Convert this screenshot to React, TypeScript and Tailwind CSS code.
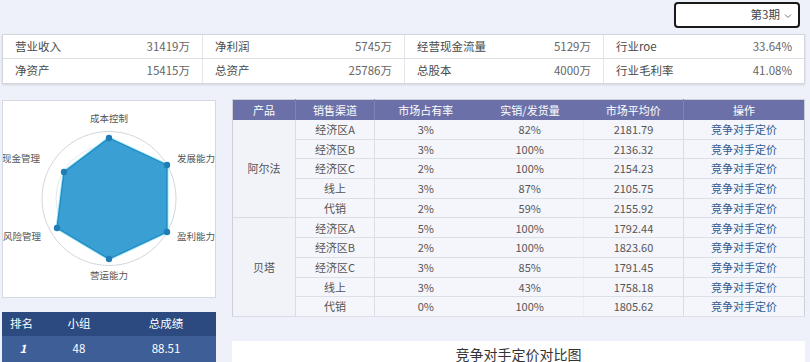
import React from "react";

const font = { fontFamily: '"Noto Sans CJK SC", "Noto Sans", sans-serif' };

const kpis = [
  [
    ["营业收入", "31419万"],
    ["净利润", "5745万"],
    ["经营现金流量", "5129万"],
    ["行业roe", "33.64%"],
  ],
  [
    ["净资产", "15415万"],
    ["总资产", "25786万"],
    ["总股本", "4000万"],
    ["行业毛利率", "41.08%"],
  ],
];

const rows: [string, string, string, string][] = [
  ["经济区A", "3%", "82%", "2181.79"],
  ["经济区B", "3%", "100%", "2136.32"],
  ["经济区C", "2%", "100%", "2154.23"],
  ["线上", "3%", "87%", "2105.75"],
  ["代销", "2%", "59%", "2155.92"],
  ["经济区A", "5%", "100%", "1792.44"],
  ["经济区B", "2%", "100%", "1823.60"],
  ["经济区C", "3%", "85%", "1791.45"],
  ["线上", "3%", "43%", "1758.18"],
  ["代销", "0%", "100%", "1805.62"],
];

function Radar() {
  const pts = [
    [109, 138],
    [167, 165],
    [167, 232],
    [109, 259],
    [57, 228],
    [64, 172],
  ];
  const poly = pts.map((p) => `${p[0] - 3},${p[1] - 101}`).join(" ");
  return (
    <svg width="212" height="196" viewBox="0 0 212 196" className="block">
      <circle cx="106" cy="97.5" r="67" fill="none" stroke="#d4d6dc" strokeWidth="1" />
      <circle cx="106" cy="97.5" r="53" fill="none" stroke="#e6e8ec" strokeWidth="1" />
      <polygon points={poly} fill="none" stroke="#7fe0f5" strokeWidth="3" strokeLinejoin="round" opacity="0.8" />
      <polygon points={poly} fill="#3a9fd2" stroke="#2088c2" strokeWidth="1.2" strokeLinejoin="round" />
      {pts.map((p, i) => (
        <circle key={i} cx={p[0] - 3} cy={p[1] - 101} r="3.2" fill="#1f7db6" />
      ))}
      <g fill="#555" fontSize="9.5" style={font}>
        <text x="106" y="21" textAnchor="middle">成本控制</text>
        <text x="174" y="61">发展能力</text>
        <text x="174" y="139">盈利能力</text>
        <text x="106" y="178" textAnchor="middle">营运能力</text>
        <text x="0" y="139">风险管理</text>
        <text x="-1" y="61">现金管理</text>
      </g>
    </svg>
  );
}

export default function App() {
  return (
    <div
      className="w-[810px] h-[362px] overflow-hidden bg-[#eef1f9] text-[#555] relative"
      style={font}
    >
      {/* Top bar */}
      <div className="h-[34px] flex justify-end items-start pt-[2px] pr-[10px]">
        <div className="w-[126px] h-[26px] border-2 border-[#1a1a1a] rounded-[4px] bg-white flex items-center justify-end pr-[6px] gap-[4px] text-[11.5px] text-[#444]">
          <span>第3期</span>
          <svg width="8" height="6" viewBox="0 0 8 6" className="mt-[1px]">
            <path d="M1 1.5 L4 4.5 L7 1.5" fill="none" stroke="#777" strokeWidth="1" />
          </svg>
        </div>
      </div>

      {/* KPI box */}
      <div className="ml-[2px] mr-[5px] bg-white border border-[#d3d6de] shadow-[0_1px_2px_rgba(0,0,0,0.12)] text-[11.5px] text-[#4a4a4a]">
        {kpis.map((row, ri) => (
          <div
            key={ri}
            className={`grid grid-cols-[200px_202px_199px_1fr] h-[24px] ${ri === 0 ? "border-b border-[#dcdfe5]" : ""}`}
          >
            {row.map(([label, value], ci) => (
              <div
                key={ci}
                className={`flex items-center justify-between pl-[12px] pr-[12px] ${ci < 3 ? "border-r border-[#e3e5ea]" : ""}`}
              >
                <span>{label}</span>
                <span className="text-[#666]">{value}</span>
              </div>
            ))}
          </div>
        ))}
      </div>

      {/* Main */}
      <div className="flex gap-[16px] pl-[2px] mt-[16px]">
        {/* left column */}
        <div className="w-[214px] flex flex-col gap-[14px]">
          <div className="h-[198px] bg-white border border-[#d6d9e1] overflow-hidden">
            <Radar />
          </div>
          <div className="text-[11.5px] text-white">
            <div className="grid grid-cols-[40px_74px_1fr] h-[24px] bg-[#2c4a7f] items-center text-center">
              <span className="text-left pl-[8px]">排名</span>
              <span>小组</span>
              <span>总成绩</span>
            </div>
            <div className="grid grid-cols-[40px_74px_1fr] h-[26px] bg-[#3e5e98] items-center text-center">
              <span className="italic font-bold pl-[2px]">1</span>
              <span>48</span>
              <span>88.51</span>
            </div>
          </div>
        </div>

        {/* right column */}
        <div className="w-[572px] flex flex-col">
          <table className="border-collapse text-[11px] text-center bg-[#f5f6fb] border border-[#cdd0d9] table-fixed w-[572px] mt-[-1px]">
            <colgroup>
              <col className="w-[63px]" />
              <col className="w-[79px]" />
              <col className="w-[102px]" />
              <col className="w-[107px]" />
              <col className="w-[100px]" />
              <col className="w-[121px]" />
            </colgroup>
            <thead>
              <tr className="h-[20px] bg-[#6b71a8] text-white">
                <th className="font-normal border-r border-[#7d83b5]">产品</th>
                <th className="font-normal border-r border-[#7d83b5]">销售渠道</th>
                <th className="font-normal">市场占有率</th>
                <th className="font-normal">实销/发货量</th>
                <th className="font-normal border-r border-[#7d83b5]">市场平均价</th>
                <th className="font-normal">操作</th>
              </tr>
            </thead>
            <tbody>
              {rows.map((r, i) => (
                <tr key={i} className="h-[19.7px]">
                  {i % 5 === 0 && (
                    <td rowSpan={5} className="border-r border-b border-[#d9dce4] bg-[#f1f3f9]">
                      {i === 0 ? "阿尔法" : "贝塔"}
                    </td>
                  )}
                  <td className="border-r border-b border-[#dcdfe6] p-0">{r[0]}</td>
                  <td className="border-b border-[#dcdfe6] p-0">{r[1]}</td>
                  <td className="border-b border-[#dcdfe6] border-r border-r-[#eceef3] p-0">{r[2]}</td>
                  <td className="border-b border-[#dcdfe6] border-r border-r-[#d9dce4] p-0">{r[3]}</td>
                  <td className="border-b border-[#dcdfe6] p-0 text-[#2e5b94]">竞争对手定价</td>
                </tr>
              ))}
            </tbody>
          </table>
          <div className="mt-[24px] h-[60px] bg-white w-[573px] pt-[4px] text-center text-[14px] leading-[18px] text-[#333]">
            竞争对手定价对比图
          </div>
        </div>
      </div>
    </div>
  );
}
